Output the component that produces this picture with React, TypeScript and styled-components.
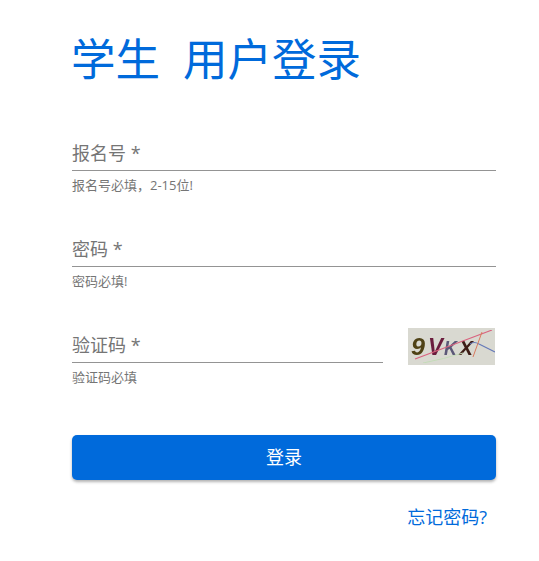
import { createGlobalStyle } from "styled-components";
import styled from "styled-components";

const GlobalStyle = createGlobalStyle`
  html, body {
    margin: 0;
    padding: 0;
    background: #fff;
    font-family: "Open Sans", "Noto Sans CJK SC", sans-serif;
  }
`;

const Page = styled.div`
  width: 424px;
  margin-left: 72px;
  padding-top: 29px;
  display: flex;
  flex-direction: column;
`;

const Title = styled.h1`
  margin: 0 0 48px -1px;
  display: flex;
  gap: 23px;
  font-size: 44.5px;
  line-height: 60px;
  font-weight: 400;
  color: #006adb;
`;

const Form = styled.form`
  display: flex;
  flex-direction: column;
  gap: 21px;
`;

const Row = styled.div`
  display: flex;
  justify-content: space-between;
`;

const Field = styled.div<{ $width: number }>`
  width: ${(p) => p.$width}px;
  height: 75px;
`;

const Label = styled.div`
  height: 33px;
  border-bottom: 1px solid #949494;
  font-size: 18px;
  line-height: 33px;
  color: #757575;
`;

const Helper = styled.div`
  margin-top: 6px;
  font-size: 13px;
  line-height: 16px;
  color: #757575;
`;

const CaptchaBox = styled.div`
  width: 87px;
  height: 37px;
  margin: -1px 1px 0 0;
`;

const Submit = styled.button`
  width: 100%;
  height: 45px;
  margin-top: 10px;
  padding: 0 0 3px;
  border: none;
  border-radius: 5px;
  background: #006adb;
  color: #fff;
  font: inherit;
  font-size: 18px;
  box-shadow: 0 2px 3px rgba(0, 0, 0, 0.3);
`;

const Footer = styled.div`
  display: flex;
  justify-content: flex-end;
  margin-top: 24px;
  padding-right: 9px;
`;

const ForgotLink = styled.a`
  font-size: 18px;
  line-height: 26px;
  color: #006adb;
  text-decoration: none;
`;

function Captcha() {
  return (
    <svg width="87" height="37" viewBox="0 0 87 37" style={{ display: "block" }}>
      <defs>
        <filter id="soft" x="0" y="0" width="100%" height="100%">
          <feGaussianBlur stdDeviation="0.4" />
        </filter>
      </defs>
      <rect x="0" y="0" width="87" height="37" fill="#d9d9d1" />
      <g filter="url(#soft)">
        <g fontFamily="'Liberation Sans', sans-serif" fontWeight="700" fontStyle="italic" fontSize="24">
          <text x="3" y="27" fill="#4f4216" textLength="14" lengthAdjust="spacingAndGlyphs">9</text>
          <text x="20" y="27" fill="#6b1f3c" textLength="15" lengthAdjust="spacingAndGlyphs">V</text>
          <text x="36" y="27" fontSize="21" fill="#5b5878" textLength="13" lengthAdjust="spacingAndGlyphs">K</text>
          <text x="51" y="27" fontSize="21" fill="#3d1c14" textLength="14" lengthAdjust="spacingAndGlyphs">X</text>
        </g>
        <path d="M7 31 L84 2" stroke="#d9637f" strokeWidth="1.2" fill="none" />
        <path d="M15 35 Q36 31 55 25" stroke="#c4dcb8" strokeWidth="1" fill="none" />
        <path d="M62 16 Q66 13 71 16 L87 24" stroke="#6478b8" strokeWidth="1.1" fill="none" />
        <path d="M74 4 L65 29" stroke="#d97a5e" strokeWidth="1" fill="none" />
      </g>
    </svg>
  );
}

export default function App() {
  return (
    <>
      <GlobalStyle />
      <Page>
        <Title>
          <span>学生</span>
          <span>用户登录</span>
        </Title>
        <Form onSubmit={(e) => e.preventDefault()}>
          <Field $width={424}>
            <Label>报名号 *</Label>
            <Helper>报名号必填，2-15位!</Helper>
          </Field>
          <Field $width={424}>
            <Label>密码 *</Label>
            <Helper>密码必填!</Helper>
          </Field>
          <Row>
            <Field $width={311}>
              <Label>验证码 *</Label>
              <Helper>验证码必填</Helper>
            </Field>
            <CaptchaBox>
              <Captcha />
            </CaptchaBox>
          </Row>
          <Submit type="submit">登录</Submit>
        </Form>
        <Footer>
          <ForgotLink href="#">忘记密码?</ForgotLink>
        </Footer>
      </Page>
    </>
  );
}
